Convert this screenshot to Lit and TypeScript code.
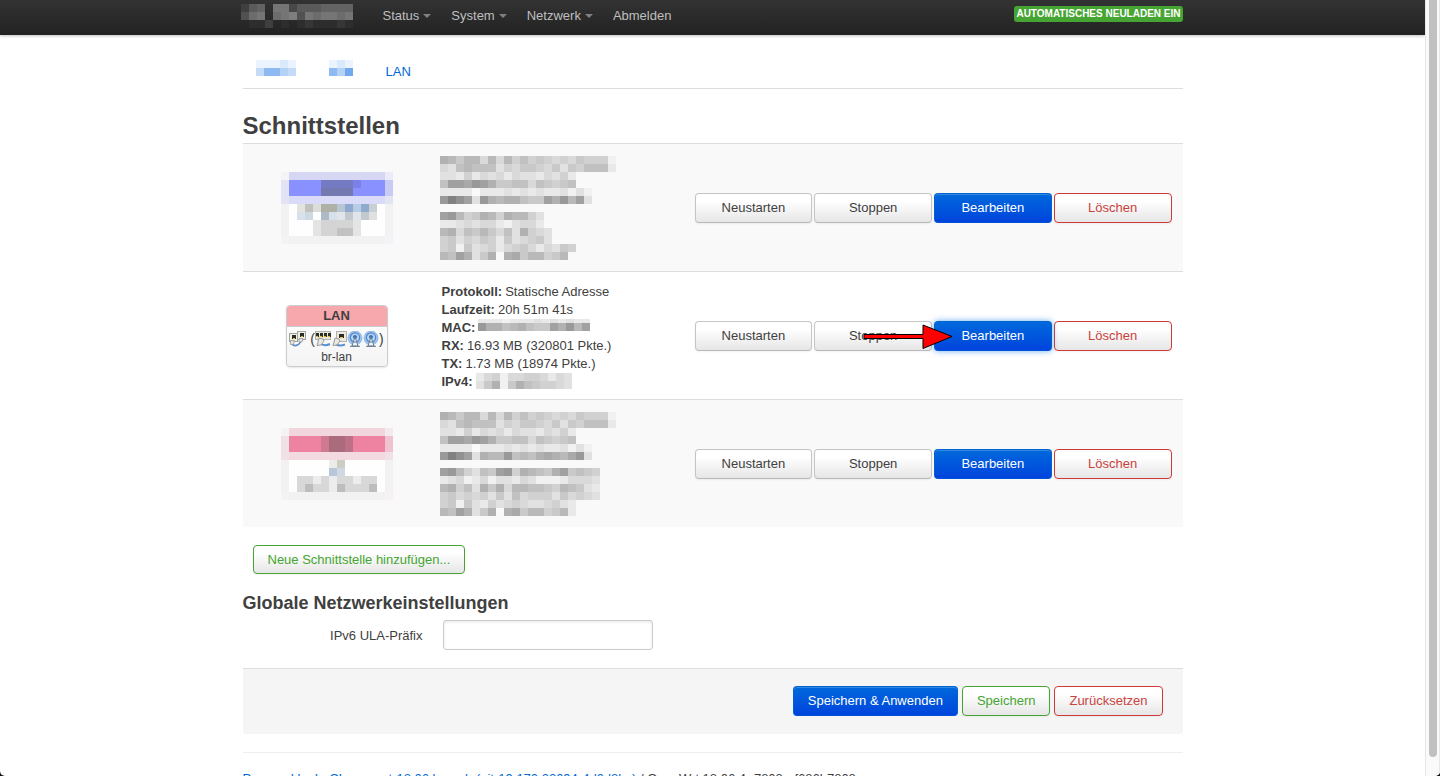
import { LitElement, html, svg, css, nothing } from "lit";
import { customElement, property } from "lit/decorators.js";

type Palette = (key: string) => string | undefined;

const CELL = 8;

/** Light greys for hidden text: each hex digit is one step darker. */
const greys: Palette = (key) => {
  const level = parseInt(key, 16);
  if (!level) return undefined;
  const v = 249 - level * 8;
  return `rgb(${v},${v},${v})`;
};

/** Greys on the dark bar: each hex digit is one step lighter. */
const darkGreys: Palette = (key) => {
  const level = parseInt(key, 16);
  if (!level) return undefined;
  const v = 36 + level * 9;
  return `rgb(${v},${v},${v})`;
};

const blues: Palette = (key) =>
  ({ a: "#ebf3fe", b: "#dbe9fd", c: "#c5dcf8", d: "#b3d2f6", e: "#8cbaf1", f: "#72a9ee" } as Record<string, string>)[key];

const wanColours: Palette = (key) =>
  ({
    a: "#f3f3f8", b: "#d6d8f3", c: "#ebebfa", d: "#e3e4f3", e: "#8990ff", f: "#757bc2",
    g: "#7479b0", h: "#7b81e6", i: "#c9cbf3", j: "#d9dbf8", k: "#f2f2f2", l: "#fefefe",
    m: "#e3e4e0", n: "#c1c2be", o: "#dcdcda", p: "#b0b1a6", q: "#b8c6d3", r: "#90aacf",
    s: "#b9cce5", t: "#c9cfd3", u: "#d8e0ec", v: "#ced8e2", w: "#aebbc7", x: "#e1e5e9",
    y: "#c2c9ce", z: "#dfe0e1", "1": "#e4e4e4", "2": "#d4d4d4", "3": "#c2c2c2",
  } as Record<string, string>)[key];

const wan6Colours: Palette = (key) =>
  ({
    a: "#f7f2f4", b: "#f1d6de", c: "#f4e9ed", d: "#f0e1e7", e: "#ed82a1", f: "#cf7a91",
    g: "#aa6c7d", h: "#bd7188", i: "#efc4d0", j: "#f3d9e0", k: "#f2f2f2", l: "#fefefe",
    m: "#ececea", n: "#cbccc3", o: "#b8c6da", p: "#d0d8e3",
    "1": "#ececec", "2": "#d8d8d8", "3": "#bdbdbd",
  } as Record<string, string>)[key];

function mosaic(rows: string[], palette: Palette, className = "mosaic", top = 0) {
  const width = Math.max(...rows.map((r) => r.length)) * CELL;
  const height = rows.length * CELL - top;
  return html`<svg class=${className} width=${width} height=${height}
    viewBox="0 ${top} ${width} ${height}" shape-rendering="crispEdges" aria-hidden="true">
    ${rows.map((row, y) =>
      [...row].map((key, x) => {
        const fill = palette(key);
        return fill
          ? svg`<rect x=${x * CELL} y=${y * CELL} width=${CELL} height=${CELL} fill=${fill}></rect>`
          : nothing;
      })
    )}
  </svg>`;
}

const WAN_DETAILS = [
  "9868848485756545465551", "4378777354665463657772", "33252434243324352",
  "7bbacb96677476567", "2222022232323223131", "cfdb3c9899766b9c8b3", "",
  "bc85698598853", "2234344213442", "89476864739543", "56354652634563",
  "56163452456424365", "87b93690 9a688568".replace(" ", ""),
];

const WAN6_DETAILS = [
  "9868848485756545465551", "4378777354665463657772", "33252434243324352",
  "7bbacb96677476567", "2222022232323223131", "cfdb3988c7879a98ac3", "",
  "bc85376bc598769b6765", "23412413324311124443", "89573969488776587632",
  "56454536374555364543", "56163253454334532", "87b936909a6885682",
];

const WAN_BOX = [
  "abbbbbbbbbbbbc", "deeeeffffheeei", "deeeeggggeeeei", "djjjjjjjjjjjjd",
  "klmnoppqrsrtlk", "kluvlwuxyxyzlk", "klll122221lllk", "klll122331lllk", "akkkkkkkkkkkka",
];

const WAN6_BOX = [
  "abbbbbbbbbbbbc", "deeeefgggheeei".replace("gggh", "gghe").slice(0, 13) + "i", "deeeefgghe eei".replace(" ", "e"), "djjjjjjjjjjjjd",
  "klllllmnlllllk", "kllllloplllllk", "kl221212212llk", "kl232213221 3k".replace(" ", ""), "akkkkkkkkkkkka",
];
WAN6_BOX[6] = "kl2212122122lk";
WAN6_BOX[7] = "kl2322132223lk";

const jack = svg`
  <rect x="0.5" y="0.5" width="8" height="8" fill="#efefea" stroke="#a3a39c"></rect>
  <rect x="3" y="2" width="4" height="4" fill="#2d2d26"></rect>
  <rect x="4" y="5" width="2" height="1" fill="#e2b93a"></rect>`;

const iconBridge = html`<svg class="port" width="17" height="16" viewBox="0 0 17 16" aria-hidden="true">
  <g transform="translate(8 0)">${jack}</g>
  <g transform="translate(0 2)">${jack}</g>
  <path d="M3 12q1 3 4 2.500t4-3 3-3" fill="none" stroke="#5b8fd0" stroke-width="1.800"></path>
  <path d="M1.500 9.500h4l-1 4h-3zM10 7.500h4l-1 3.500h-3z" fill="#e3e3e0" stroke="#8c8c8a" stroke-width=".7"></path>
</svg>`;

const iconSwitch = html`<svg class="port" width="16" height="16" viewBox="0 0 16 16" aria-hidden="true">
  <rect x="0.500" y="0.500" width="15" height="8" fill="#e8e7dd" stroke="#b3b2a6"></rect>
  ${[1, 5, 9, 13].map(
    (x) => svg`<rect x=${x} y="2" width="3" height="4" fill="#2d2d22"></rect>
      <rect x=${x} y="5" width="2" height="1" fill="#e0bb32"></rect>`
  )}
  <path d="M6 13q4 2.500 9 0" fill="none" stroke="#5b8fd0" stroke-width="2"></path>
  <path d="M4 7l4 1 1 2-3 4-4 .5 1-3.500z" fill="#e8e8e5" stroke="#868684" stroke-width=".8"></path>
</svg>`;

const iconPort = html`<svg class="port" width="16" height="16" viewBox="0 0 16 16" aria-hidden="true">
  <rect x="5.500" y="0.500" width="10" height="10" fill="#eceae2" stroke="#b3b2a6"></rect>
  <rect x="8" y="3" width="5" height="4" fill="#2d2d22"></rect>
  <rect x="9" y="6" width="3" height="1" fill="#e0bb32"></rect>
  <path d="M5 13.500q4 2 9 0" fill="none" stroke="#5b8fd0" stroke-width="2"></path>
  <path d="M4 7l4 1 1 2-3 4-4 .5 1-3.500z" fill="#e8e8e5" stroke="#868684" stroke-width=".8"></path>
</svg>`;

const iconWifi = html`<svg class="port" width="16" height="16" viewBox="0 0 16 16" aria-hidden="true">
  <circle cx="8" cy="7" r="7" fill="#9fc3ec" stroke="#86b1e3" stroke-width=".8"></circle>
  <circle cx="8" cy="6.500" r="4.600" fill="#b9d4f3" stroke="#4e87cf" stroke-width="1.200"></circle>
  <circle cx="8" cy="6" r="2" fill="#3b6fb5"></circle>
  <path d="M8 6l-3 9h6z" fill="#f2f4f6" stroke="#5e7590" stroke-width=".9"></path>
  <path d="M6.500 11h3M3 15.300h10" stroke="#5e7590" stroke-width="1"></path>
</svg>`;

const controls = css`
  .btn {
    box-sizing: border-box;
    height: 30px;
    padding: 0 14px;
    border: 1px solid #c5c5c5;
    border-bottom-color: #b8b8b8;
    border-radius: 4px;
    background: linear-gradient(#ffffff 25%, #e6e6e6);
    box-shadow: 0 1px 2px rgba(0, 0, 0, 0.05);
    color: #404040;
    font: 13px/18px "Helvetica Neue", "Liberation Sans", Arial, sans-serif;
    white-space: nowrap;
    cursor: pointer;
  }
  .btn.apply {
    border-color: #0064cd #0064cd #0050d8;
    background: linear-gradient(#0069dc, #0044dd);
    box-shadow: inset 0 1px 0 rgba(255, 255, 255, 0.2);
    color: #ffffff;
  }
  .btn.hover {
    box-shadow: 0 0 6px rgba(0, 120, 230, 0.6);
  }
  .btn.positive {
    border-color: #46a532;
    color: #46a532;
  }
  .btn.negative {
    border-color: #cc3b37;
    color: #c9423d;
  }
`;

@customElement("interface-actions")
export class InterfaceActions extends LitElement {
  @property({ type: Boolean }) marked = false;

  static styles = [
    controls,
    css`
      :host {
        display: block;
      }
      .group {
        display: grid;
        grid-template-columns: repeat(4, 1fr);
        gap: 2px;
      }
      .slot {
        position: relative;
        display: grid;
      }
      .arrow {
        position: absolute;
        left: -72px;
        top: 2px;
        pointer-events: none;
      }
    `,
  ];

  render() {
    return html`<div class="group">
      <button class="btn">Neustarten</button>
      <button class="btn">Stoppen</button>
      <div class="slot">
        <button class="btn apply ${this.marked ? "hover" : ""}">Bearbeiten</button>
        ${this.marked
          ? html`<svg class="arrow" width="92" height="27" viewBox="0 0 92 27" aria-hidden="true">
              <path d="M2 11.500H61V2L90 13.500 61 25.500V15.500H2z" fill="#ff0000" stroke="#000000"></path>
            </svg>`
          : nothing}
      </div>
      <button class="btn negative">Löschen</button>
    </div>`;
  }
}

@customElement("app-root")
export class AppRoot extends LitElement {
  static styles = [
    controls,
    css`
      :host {
        display: block;
        height: 100vh;
        overflow: hidden;
        background: #111111;
        color: #404040;
        font: 13px/18px "Helvetica Neue", "Liberation Sans", Arial, sans-serif;
      }
      .window {
        display: flex;
        height: 100%;
        overflow: hidden;
        border-radius: 0 0 5px 5px;
        background: #ffffff;
      }
      .page {
        flex: 1;
        min-width: 0;
        overflow: hidden;
      }
      .scrollbar {
        box-sizing: border-box;
        width: 15px;
        padding: 0 3px 19px;
        border: solid #e8e8e8;
        border-width: 0 1px;
        background: #fafafa;
      }
      .thumb {
        width: 8px;
        height: 100%;
        border-radius: 0 0 4px 4px;
        background: #c1c1c1;
      }
      .container {
        max-width: 940px;
        margin: 0 auto;
      }
      svg {
        display: block;
      }
      a {
        color: #0069d6;
        text-decoration: none;
      }
      .hidden-text {
        margin-left: -2px;
      }
      .bar {
        height: 35px;
        background: linear-gradient(#333333, #222222);
        box-shadow: 0 1px 3px rgba(0, 0, 0, 0.25);
      }
      .bar .container {
        display: flex;
        align-items: flex-start;
      }
      .brand {
        padding: 4px 20px 0 0;
      }
      .menu {
        display: flex;
        flex: 1;
        margin: 0;
        padding: 7px 0 0;
        list-style: none;
      }
      .menu a {
        display: flex;
        align-items: center;
        gap: 4px;
        padding: 0 10px;
        color: #bfbfbf;
      }
      .caret {
        border: 4px solid transparent;
        border-top-color: #808080;
        border-bottom: 0;
      }
      .indicator {
        margin-top: 6px;
        padding: 0 2px;
        border: 0;
        border-radius: 3px;
        background: #46a532;
        color: #ffffff;
        font: bold 10px/16px "Helvetica Neue", "Liberation Sans", Arial, sans-serif;
        text-transform: uppercase;
      }
      main {
        padding-top: 19px;
      }
      .tabs {
        display: flex;
        align-items: center;
        gap: 33px;
        margin: 0 0 18px;
        padding: 2px 13px 0;
        border-bottom: 1px solid #dddddd;
        line-height: 32px;
        list-style: none;
      }
      .tabs svg {
        padding-bottom: 8px;
      }
      h2 {
        margin: 0;
        padding-top: 2px;
        font-size: 24px;
        line-height: 34px;
      }
      h3 {
        margin: 10px 0 0;
        padding-top: 2px;
        font-size: 18px;
        line-height: 34px;
      }
      .interfaces {
        width: 100%;
        border-spacing: 0;
        table-layout: fixed;
      }
      .interfaces td {
        height: 110px;
        padding: 9px 0 8px;
        border-top: 1px solid #dddddd;
      }
      .interfaces tr:nth-child(odd) td {
        background: #f9f9f9;
      }
      .interfaces .col-box {
        width: 188px;
      }
      .interfaces .col-details {
        padding-left: 11px;
      }
      .interfaces .col-actions {
        width: 477px;
        padding-right: 11px;
      }
      .col-box svg.mosaic {
        margin: 0 auto;
      }
      .box {
        box-sizing: border-box;
        width: 102px;
        margin: 0 auto;
        border: 1px solid #cccccc;
        border-radius: 4px;
        background: linear-gradient(#ffffff, #f4f4f4);
        box-shadow: 0 1px 2px rgba(0, 0, 0, 0.1);
        overflow: hidden;
        text-align: center;
      }
      .box-head {
        border-bottom: 1px solid #cccccc;
        background: #f6a8ac;
        font-weight: bold;
        line-height: 20px;
      }
      .box-body {
        padding: 2px 0 1px;
        font-size: 12px;
        line-height: 16px;
      }
      .ports {
        display: flex;
        align-items: center;
        justify-content: center;
        height: 20px;
        font-size: 14px;
      }
      .port {
        flex: none;
      }
      .bridge {
        margin-right: 4px;
      }
      .details {
        padding-top: 2px;
      }
      .line {
        display: flex;
        gap: 3px;
        align-items: flex-start;
        height: 18px;
        white-space: nowrap;
      }
      .add-row {
        padding: 18px 10px 0;
      }
      .add-row .btn {
        display: block;
        height: 29px;
      }
      .field {
        display: flex;
        align-items: center;
        gap: 20px;
        margin-bottom: 18px;
      }
      .field label {
        width: 180px;
        padding-top: 2px;
        text-align: right;
      }
      .field input {
        box-sizing: border-box;
        width: 210px;
        height: 30px;
        padding: 4px;
        border: 1px solid #cccccc;
        border-radius: 3px;
        box-shadow: inset 0 1px 3px rgba(0, 0, 0, 0.1);
        color: #404040;
        font: inherit;
      }
      .page-actions {
        display: flex;
        justify-content: flex-end;
        gap: 4px;
        margin-bottom: 18px;
        padding: 17px 20px 18px;
        border-top: 1px solid #dddddd;
        border-radius: 0 0 3px 3px;
        background: #f5f5f5;
      }
      footer {
        padding-top: 17px;
        border-top: 1px solid #eeeeee;
        white-space: nowrap;
      }
    `,
  ];

  private row(box: unknown, details: unknown, marked = false) {
    return html`<tr>
      <td class="col-box">${box}</td>
      <td class="col-details">${details}</td>
      <td class="col-actions"><interface-actions ?marked=${marked}></interface-actions></td>
    </tr>`;
  }

  private lanBox() {
    return html`<div class="box">
      <div class="box-head">LAN</div>
      <div class="box-body">
        <div class="ports">
          <span class="bridge">${iconBridge}</span>(${iconSwitch}${iconPort}${iconWifi}${iconWifi})
        </div>
        br-lan
      </div>
    </div>`;
  }

  private lanDetails() {
    const mac = mosaic(["22212223232322", "c99789766b9c8b"], greys, "mosaic", 4);
    const ip = mosaic(["245144554243", "369169765543"], greys);
    const lines: [string, unknown][] = [
      ["Protokoll:", "Statische Adresse"],
      ["Laufzeit:", "20h 51m 41s"],
      ["MAC:", mac],
      ["RX:", "16.93 MB (320801 Pkte.)"],
      ["TX:", "1.73 MB (18974 Pkte.)"],
      ["IPv4:", ip],
    ];
    return html`<div class="details">
      ${lines.map(([name, value]) => html`<div class="line"><strong>${name}</strong>${value}</div>`)}
    </div>`;
  }

  render() {
    return html`<div class="window">
      <div class="page">
        <header class="bar">
          <div class="container">
            <a class="brand" href="#" aria-label="Startseite">
              ${mosaic(["36709946667777", "589089a5989989", "01130101211121"], darkGreys, "hidden-text")}
            </a>
            <ul class="menu">
              ${["Status", "System", "Netzwerk"].map(
                (name) => html`<li><a href="#">${name}<span class="caret"></span></a></li>`
              )}
              <li><a href="#">Abmelden</a></li>
            </ul>
            <button class="indicator">Automatisches Neuladen ein</button>
          </div>
        </header>
        <main class="container">
          <ul class="tabs">
            <li><a href="#" aria-label="WAN6">${mosaic(["aaaba", "ceedc"], blues)}</a></li>
            <li><a href="#" aria-label="WAN">${mosaic(["aba", "edf"], blues)}</a></li>
            <li><a href="#">LAN</a></li>
          </ul>
          <h2>Schnittstellen</h2>
          <table class="interfaces">
            <tbody>
              ${this.row(mosaic(WAN_BOX, wanColours), mosaic(WAN_DETAILS, greys, "hidden-text"))}
              ${this.row(this.lanBox(), this.lanDetails(), true)}
              ${this.row(mosaic(WAN6_BOX, wan6Colours), mosaic(WAN6_DETAILS, greys, "hidden-text"))}
            </tbody>
          </table>
          <div class="add-row">
            <button class="btn positive">Neue Schnittstelle hinzufügen...</button>
          </div>
          <h3>Globale Netzwerkeinstellungen</h3>
          <div class="field">
            <label for="ula">IPv6 ULA-Präfix</label>
            <input id="ula" type="text" />
          </div>
          <div class="page-actions">
            <button class="btn apply">Speichern &amp; Anwenden</button>
            <button class="btn positive">Speichern</button>
            <button class="btn negative">Zurücksetzen</button>
          </div>
          <footer>
            <a href="#">Powered by LuCI openwrt-18.06 branch (git-19.170.32094-4d6d8bc)</a> / OpenWrt 18.06.4
            r7808-ef686b7808
          </footer>
        </main>
      </div>
      <div class="scrollbar" aria-hidden="true"><div class="thumb"></div></div>
    </div>`;
  }
}
